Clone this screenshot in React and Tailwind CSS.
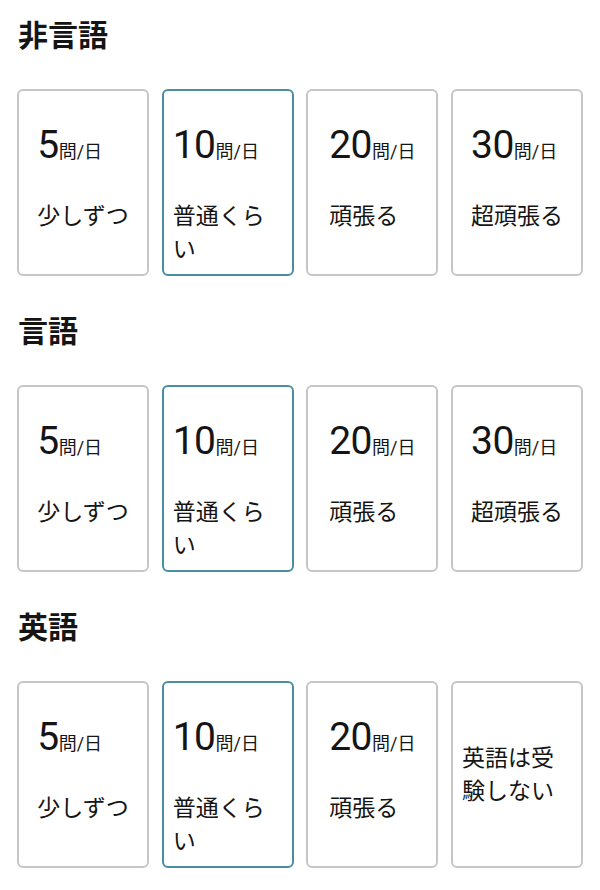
import React from 'react';

const sections = [
  {
    title: '非言語',
    options: [
      { n: '5', label: '少しずつ' },
      { n: '10', label: '普通くらい', selected: true },
      { n: '20', label: '頑張る' },
      { n: '30', label: '超頑張る' },
    ],
  },
  {
    title: '言語',
    options: [
      { n: '5', label: '少しずつ' },
      { n: '10', label: '普通くらい', selected: true },
      { n: '20', label: '頑張る' },
      { n: '30', label: '超頑張る' },
    ],
  },
  {
    title: '英語',
    options: [
      { n: '5', label: '少しずつ' },
      { n: '10', label: '普通くらい', selected: true },
      { n: '20', label: '頑張る' },
      { label: '英語は受験しない' },
    ],
  },
];

const Card = ({ n, label, selected }) => (
  <div
    className={`h-[187px] rounded-[6px] border-2 bg-white flex px-[9px] ${
      selected ? 'border-[#4a8ea3]' : 'border-[#c6c6c6]'
    } ${n ? 'pt-[29px] justify-center items-start' : 'items-center justify-center'}`}
  >
    <div className="text-[#151515]">
      {n && (
        <div className="flex items-baseline h-[50px]">
          <span className="text-[39px] leading-[50px] tracking-[-0.5px]">{n}</span>
          <span className="text-[18px]">問/日</span>
        </div>
      )}
      <div className={`text-[23px] leading-[33px] ${n ? 'mt-[30px]' : ''}`}>{label}</div>
    </div>
  </div>
);

export default function App() {
  return (
    <div
      className="w-[600px] h-[890px] bg-white px-[17px] pt-[16px] overflow-hidden"
      style={{ fontFamily: 'Roboto, "Noto Sans CJK JP", sans-serif' }}
    >
      {sections.map((s, i) => (
        <div key={i} className={i > 0 ? 'mt-[36px]' : ''}>
          <h2 className="text-[30px] font-bold leading-[40px] text-[#151515] pl-[1px]">{s.title}</h2>
          <div className="mt-[33px] grid grid-cols-4 gap-x-[12.7px]">
            {s.options.map((o, j) => (
              <Card key={j} {...o} />
            ))}
          </div>
        </div>
      ))}
    </div>
  );
}
